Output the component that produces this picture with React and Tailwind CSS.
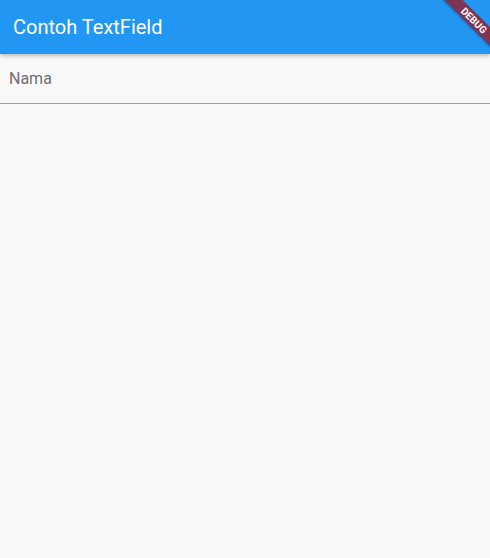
export default function App() {
  return (
    <div className="relative h-[558px] w-[490px] overflow-hidden bg-[#faf9fa] font-['Roboto',sans-serif]">
      <header className="relative z-10 flex h-[54px] items-center bg-[#2196f3] px-[13px] shadow-[0_2px_4px_rgba(0,0,0,0.25)]">
        <h1 className="text-[20px] font-normal text-white">Contoh TextField</h1>
      </header>

      <div className="flex h-[50px] items-center border-b border-[#9c9c9c] px-[9px] pt-[1px] text-[16px] text-[#6e6e73]">
        Nama
      </div>

      <div className="absolute left-[422px] top-[14px] z-20 flex h-[13px] w-[104px] rotate-45 items-center justify-center bg-[#7d3554] shadow-[0_1px_2px_rgba(0,0,0,0.3)]">
        <span className="text-[10px] font-bold leading-none text-white">DEBUG</span>
      </div>
    </div>
  );
}
